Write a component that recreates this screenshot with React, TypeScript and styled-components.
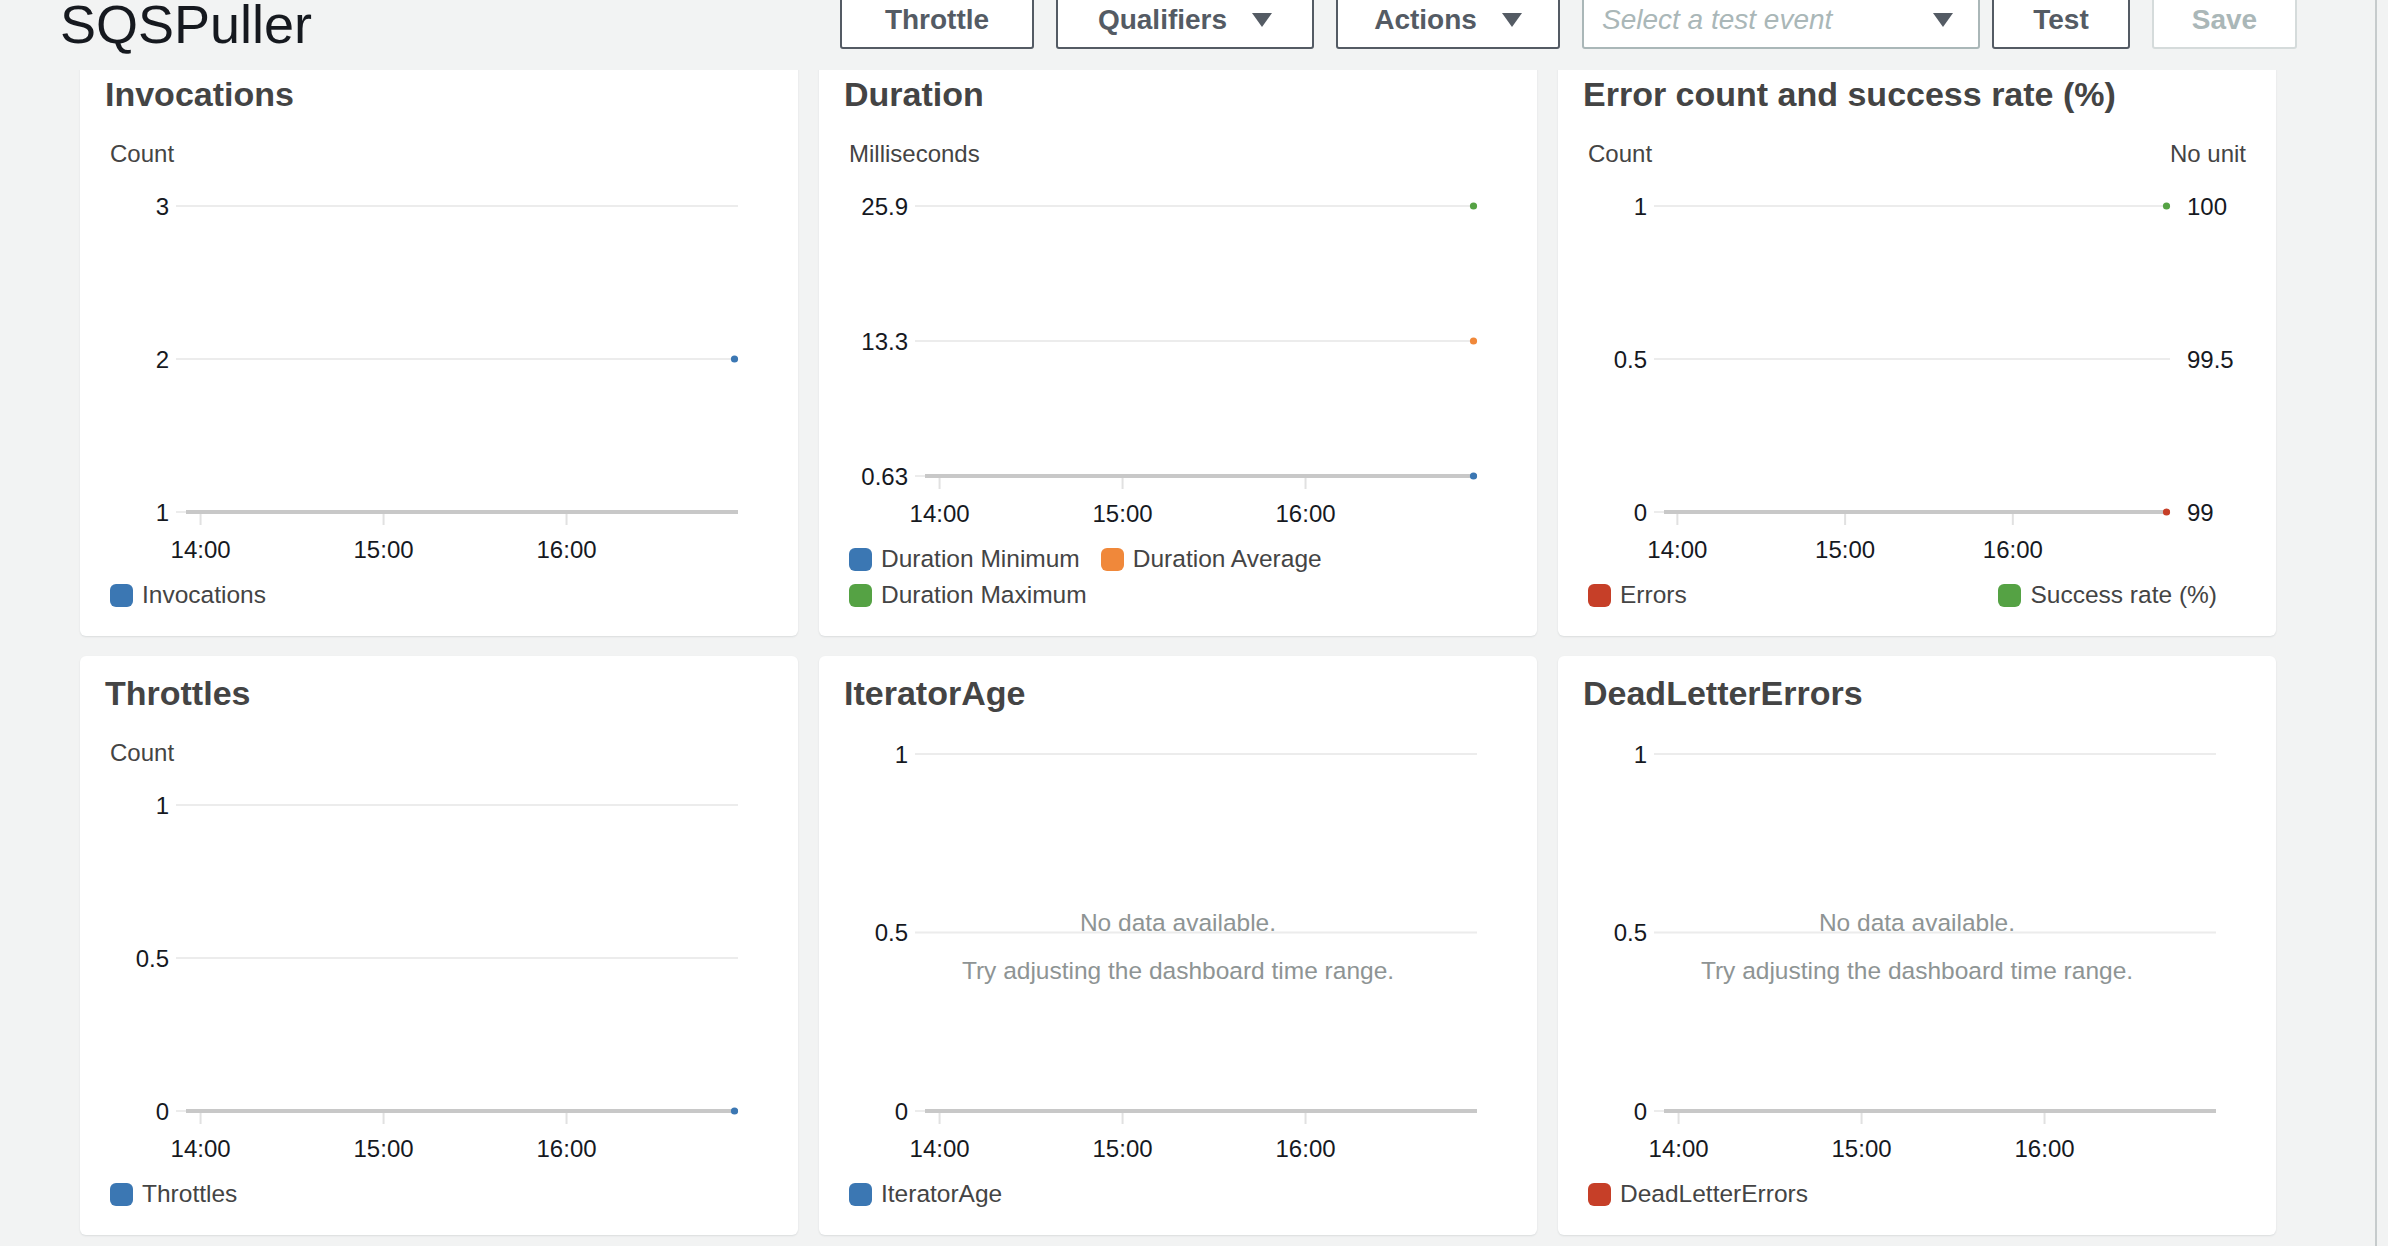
import React from 'react';
import styled, { createGlobalStyle } from 'styled-components';

const FONT = `"Liberation Sans", Arial, sans-serif`;
const CARD_W = 718;

const GlobalStyle = createGlobalStyle`
  html, body { margin: 0; padding: 0; background: #f2f3f3; }
  body { font-family: ${FONT}; overflow: hidden; }
  * { box-sizing: border-box; }
`;

const Page = styled.div`
  display: flex;
  width: 2388px;
  height: 1246px;
  overflow: hidden;
  background: #f2f3f3;
`;

const Main = styled.main`
  flex: 1;
  min-width: 0;
  display: flex;
  flex-direction: column;
`;

const SideRail = styled.aside`
  width: 13px;
  border-left: 2px solid #c6cbcc;
  background: #f2f3f3;
`;

const Header = styled.header`
  position: relative;
  z-index: 2;
  height: 70px;
  flex-shrink: 0;
  display: flex;
  align-items: flex-start;
  padding: 0 78px 0 60px;
  background: #f2f3f3;
`;

const PageTitle = styled.h1`
  margin: -3px 0 0;
  font: 400 54px/54px ${FONT};
  color: #16191f;
`;

const Toolbar = styled.div`
  margin: -11px 0 0 auto;
  display: flex;
  gap: 22px;
`;

const ToolGroup = styled.div`
  display: flex;
  gap: 12px;
`;

const Button = styled.button<{ $w: number; $disabled?: boolean }>`
  width: ${(p) => p.$w}px;
  height: 60px;
  padding: 2px 0 0;
  border: 2px solid ${(p) => (p.$disabled ? '#d5dbdb' : '#545b64')};
  border-radius: 3px;
  background: #fff;
  color: ${(p) => (p.$disabled ? '#aab7b8' : '#545b64')};
  font: 700 28px/1 ${FONT};
  display: flex;
  align-items: center;
  justify-content: center;
  gap: 25px;
  cursor: pointer;
`;

const SelectBox = styled.div`
  width: 398px;
  height: 60px;
  border: 2px solid #aab7b8;
  border-radius: 3px;
  background: #fff;
  display: flex;
  align-items: center;
  justify-content: space-between;
  padding: 2px 25px 0 18px;
`;

const Placeholder = styled.span`
  font: italic 400 28px/1 ${FONT};
  color: #aab7b8;
`;

const Content = styled.div`
  margin: -13px 0 0 80px;
  display: grid;
  grid-template-columns: repeat(3, ${CARD_W}px);
  grid-auto-rows: 579px;
  column-gap: 21px;
  row-gap: 20px;
`;

const Card = styled.section`
  position: relative;
  background: #fff;
  border-radius: 6px;
  box-shadow: 0 1px 2px rgba(0, 28, 36, 0.1);
  display: flex;
  flex-direction: column;
`;

const CardTitle = styled.h2`
  margin: 17px 0 0;
  padding-left: 25px;
  height: 40px;
  font: 700 34px/40px ${FONT};
  color: #444;
`;

const UnitRow = styled.div`
  margin-top: 25px;
  height: 30px;
  padding: 0 30px;
  display: flex;
  justify-content: space-between;
  font: 400 24px/30px ${FONT};
  color: #444;
`;

const ChartArea = styled.div<{ $h: number }>`
  position: relative;
  height: ${(p) => p.$h}px;
  flex-shrink: 0;
`;

const ChartSvg = styled.svg`
  display: block;
  font-family: ${FONT};
  font-size: 24px;
`;

const NoData = styled.div`
  position: absolute;
  left: 0;
  right: 0;
  top: 192px;
  display: flex;
  flex-direction: column;
  align-items: center;
  gap: 12px;
  font: 400 24.5px/36px ${FONT};
  color: #8e9494;
`;

const Legend = styled.div<{ $split?: boolean }>`
  margin-top: auto;
  padding: 0 ${(p) => (p.$split ? 59 : 30)}px 23px 30px;
  display: flex;
  flex-wrap: wrap;
  column-gap: 21px;
  justify-content: ${(p) => (p.$split ? 'space-between' : 'flex-start')};
`;

const LegendItem = styled.div`
  height: 36px;
  display: flex;
  align-items: center;
  gap: 9px;
  font: 400 24.5px/36px ${FONT};
  color: #444;
`;

const Swatch = styled.span<{ $c: string }>`
  width: 23px;
  height: 23px;
  border-radius: 6px;
  background: ${(p) => p.$c};
  flex-shrink: 0;
`;

const BLUE = '#3b77b3';
const ORANGE = '#f0883a';
const GREEN = '#55a244';
const RED = '#c63f28';

const Caret = () => (
  <svg width="20" height="14" viewBox="0 0 20 14">
    <path d="M0 0 H20 L10 14 Z" fill="#545b64" />
  </svg>
);

type Dot = { row: number; color: string };

interface ChartProps {
  height: number;
  top: number;
  left: string[];
  right?: string[];
  dots?: Dot[];
  noData?: boolean;
}

const Chart = ({ height, top, left, right, dots = [], noData }: ChartProps) => {
  const bottom = height - 65;
  const plotRight = right ? 612 : 658;
  const gridStart = 96;
  const dataStart = 106;
  const W = plotRight - dataStart;
  const step = (bottom - top) / (left.length - 1);
  const ys = left.map((_, i) => top + i * step);
  const ticks = ['14:00', '15:00', '16:00'].map((t, k) => ({
    t,
    x: dataStart + W * (0.0264 + k * 0.3315),
  }));
  return (
    <ChartArea $h={height}>
      <ChartSvg width={CARD_W} height={height}>
        {ys.map((y, i) => (
          <line key={`g${i}`} x1={gridStart} x2={plotRight} y1={y} y2={y} stroke="#ececec" strokeWidth={2} />
        ))}
        <line x1={dataStart} x2={plotRight} y1={bottom} y2={bottom} stroke="#c8c8c8" strokeWidth={4} />
        {ticks.map((tk) => (
          <g key={tk.t}>
            <line x1={tk.x} x2={tk.x} y1={bottom + 2} y2={bottom + 13} stroke="#e1e1e1" strokeWidth={2} />
            <text x={tk.x} y={height - 28 + 8.5} textAnchor="middle" fill="#16191f">
              {tk.t}
            </text>
          </g>
        ))}
        {left.map((l, i) => (
          <text key={`l${i}`} x={89} y={ys[i] + 8.5} textAnchor="end" fill="#16191f">
            {l}
          </text>
        ))}
        {right &&
          right.map((r, i) => (
            <text key={`r${i}`} x={629} y={ys[i] + 8.5} textAnchor="start" fill="#16191f">
              {r}
            </text>
          ))}
        {dots.map((d, i) => (
          <circle key={`d${i}`} cx={plotRight - 3.5} cy={ys[d.row]} r={3.6} fill={d.color} />
        ))}
      </ChartSvg>
      {noData && (
        <NoData>
          <span>No data available.</span>
          <span>Try adjusting the dashboard time range.</span>
        </NoData>
      )}
    </ChartArea>
  );
};

interface Widget {
  title: string;
  unitLeft?: string;
  unitRight?: string;
  left: string[];
  right?: string[];
  dots?: Dot[];
  noData?: boolean;
  legend: { label: string; color: string }[];
  legendRows: number;
  split?: boolean;
}

const widgets: Widget[] = [
  {
    title: 'Invocations',
    unitLeft: 'Count',
    left: ['3', '2', '1'],
    dots: [{ row: 1, color: BLUE }],
    legend: [{ label: 'Invocations', color: BLUE }],
    legendRows: 1,
  },
  {
    title: 'Duration',
    unitLeft: 'Milliseconds',
    left: ['25.9', '13.3', '0.63'],
    dots: [
      { row: 0, color: GREEN },
      { row: 1, color: ORANGE },
      { row: 2, color: BLUE },
    ],
    legend: [
      { label: 'Duration Minimum', color: BLUE },
      { label: 'Duration Average', color: ORANGE },
      { label: 'Duration Maximum', color: GREEN },
    ],
    legendRows: 2,
  },
  {
    title: 'Error count and success rate (%)',
    unitLeft: 'Count',
    unitRight: 'No unit',
    left: ['1', '0.5', '0'],
    right: ['100', '99.5', '99'],
    dots: [
      { row: 0, color: GREEN },
      { row: 2, color: RED },
    ],
    legend: [
      { label: 'Errors', color: RED },
      { label: 'Success rate (%)', color: GREEN },
    ],
    legendRows: 1,
    split: true,
  },
  {
    title: 'Throttles',
    unitLeft: 'Count',
    left: ['1', '0.5', '0'],
    dots: [{ row: 2, color: BLUE }],
    legend: [{ label: 'Throttles', color: BLUE }],
    legendRows: 1,
  },
  {
    title: 'IteratorAge',
    left: ['1', '0.5', '0'],
    noData: true,
    legend: [{ label: 'IteratorAge', color: BLUE }],
    legendRows: 1,
  },
  {
    title: 'DeadLetterErrors',
    left: ['1', '0.5', '0'],
    noData: true,
    legend: [{ label: 'DeadLetterErrors', color: RED }],
    legendRows: 1,
  },
];

const WidgetCard = ({ w }: { w: Widget }) => {
  const hasUnit = Boolean(w.unitLeft);
  const headerBottom = hasUnit ? 112 : 57;
  const chartHeight = 579 - 23 - w.legendRows * 36 - headerBottom;
  return (
    <Card>
      <CardTitle>{w.title}</CardTitle>
      {hasUnit && (
        <UnitRow>
          <span>{w.unitLeft}</span>
          {w.unitRight && <span>{w.unitRight}</span>}
        </UnitRow>
      )}
      <Chart
        height={chartHeight}
        top={hasUnit ? 37 : 41}
        left={w.left}
        right={w.right}
        dots={w.dots}
        noData={w.noData}
      />
      <Legend $split={w.split}>
        {w.legend.map((l) => (
          <LegendItem key={l.label}>
            <Swatch $c={l.color} />
            <span>{l.label}</span>
          </LegendItem>
        ))}
      </Legend>
    </Card>
  );
};

export default function App() {
  return (
    <>
      <GlobalStyle />
      <Page>
        <Main>
          <Header>
            <PageTitle>SQSPuller</PageTitle>
            <Toolbar>
              <Button $w={194}>Throttle</Button>
              <Button $w={258}>
                <span>Qualifiers</span>
                <Caret />
              </Button>
              <Button $w={224}>
                <span>Actions</span>
                <Caret />
              </Button>
              <ToolGroup>
                <SelectBox>
                  <Placeholder>Select a test event</Placeholder>
                  <Caret />
                </SelectBox>
                <Button $w={138}>Test</Button>
              </ToolGroup>
              <Button $w={145} $disabled>
                Save
              </Button>
            </Toolbar>
          </Header>
          <Content>
            {widgets.map((w) => (
              <WidgetCard key={w.title} w={w} />
            ))}
          </Content>
        </Main>
        <SideRail />
      </Page>
    </>
  );
}
